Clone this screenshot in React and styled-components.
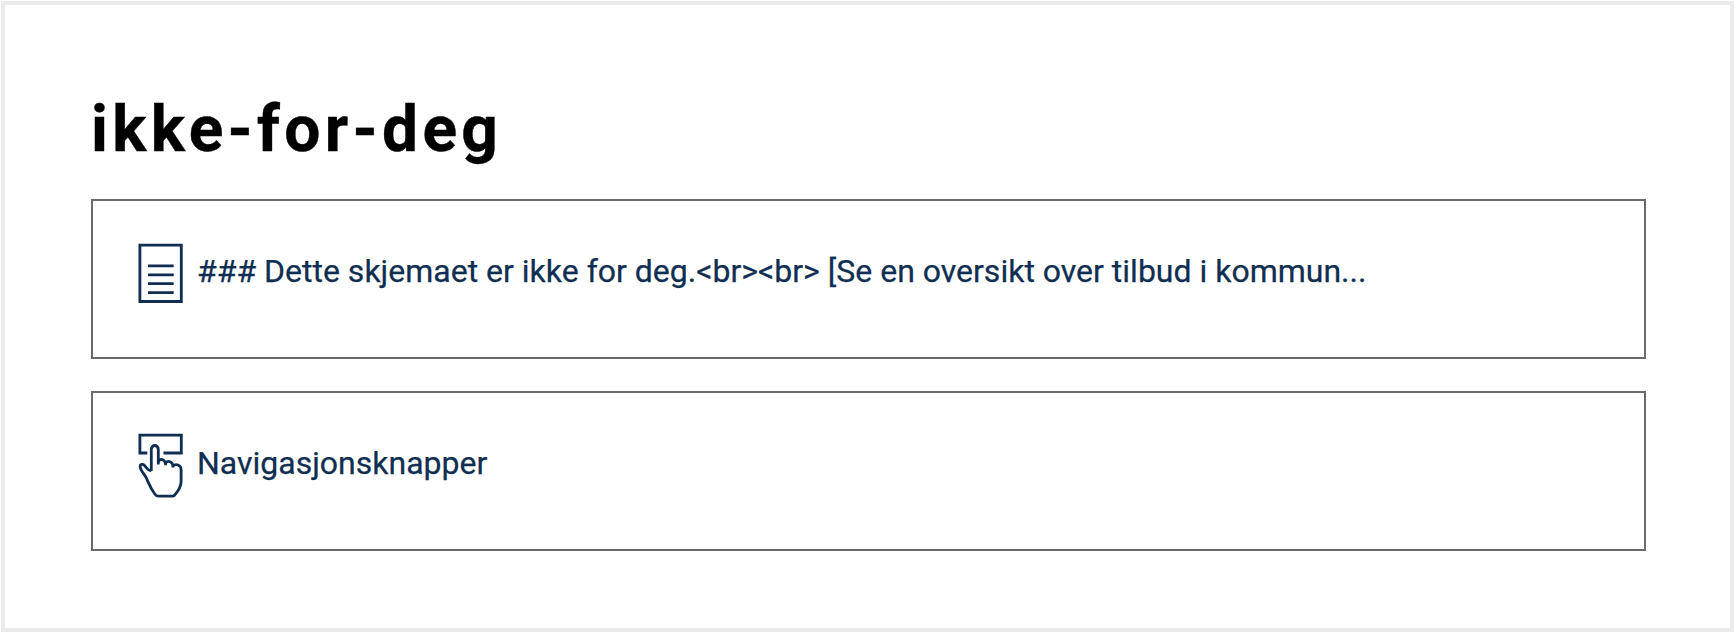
import React from "react";
import styled, { createGlobalStyle } from "styled-components";

const GlobalStyle = createGlobalStyle`
  * { box-sizing: border-box; }
  body { margin: 0; background: #fff; font-family: Roboto, sans-serif; }
`;

const Page = styled.main`
  width: 1733px;
  height: 631px;
  margin: 1px 0 0 1px;
  border: 4px solid #ebebeb;
  padding: 85px 84px 0 86px;
  overflow: hidden;
`;

const Title = styled.h1`
  margin: 0 0 29px;
  height: 80px;
  color: #000;
  font-size: 64px;
  font-weight: 700;
  line-height: 80px;
  letter-spacing: 4.32px;
  -webkit-text-stroke: 0.4px currentColor;
`;

const CardList = styled.ul`
  display: flex;
  flex-direction: column;
  gap: 32px;
  margin: 0;
  padding: 0;
  list-style: none;
`;

const Card = styled.li`
  display: flex;
  align-items: flex-start;
  gap: 14px;
  width: 1555px;
  height: 160px;
  border: 2px solid #6a6a6a;
  padding: 42px 44px;
  color: #0f2e52;
`;

const Icon = styled.svg`
  flex: none;
  width: 46px;
  height: 66px;
  overflow: visible;
  fill: none;
  stroke: currentColor;
  stroke-width: 2.8;
`;

const Label = styled.span`
  font-size: 32px;
  line-height: 56px;
  white-space: nowrap;
  -webkit-text-stroke: 0.25px currentColor;
`;

function DocumentIcon() {
  return (
    <Icon viewBox="0 0 46 66" aria-hidden="true">
      <path d="M2.9 2.2H44.3V58.5H2.9Z" />
      <path d="M11 22.9H36.7M11 31.9H36.7M11 40.7H36.7M11 49.6H36.7" />
    </Icon>
  );
}

function ButtonPressIcon() {
  return (
    <Icon viewBox="0 0 46 66" aria-hidden="true">
      <path d="M10.3 18H2.9V.2H44.3V18H26.5" />
      <path
        strokeLinejoin="round"
        d="M14.3 36V14.4C14.3 9.2 21.3 9.2 21.3 14.4V29.5M21.3 27C22.3 23 28.7 23.7 28.6 30.3M28.6 28.5C30.2 24.7 36.2 26.2 36 32.5M36 31C38.7 28.2 44.1 30 44.1 34.5V46.5C44.1 52 41.3 56 37.5 60.2Q36.7 61.1 35.3 61.1H21.3Q19.3 61.1 17.8 59C13.3 53 11.8 48.3 9.1 42.5C7.6 39.2 3.1 35.5 3.1 31.2C3.1 29.2 5.8 28.8 7.3 30.2C9.3 32.2 9.8 35 14.3 36"
      />
    </Icon>
  );
}

export default function App() {
  return (
    <>
      <GlobalStyle />
      <Page>
        <Title>ikke-for-deg</Title>
        <CardList>
          <Card>
            <DocumentIcon />
            <Label>{"### Dette skjemaet er ikke for deg.<br><br> [Se en oversikt over tilbud i kommun..."}</Label>
          </Card>
          <Card>
            <ButtonPressIcon />
            <Label>Navigasjonsknapper</Label>
          </Card>
        </CardList>
      </Page>
    </>
  );
}
